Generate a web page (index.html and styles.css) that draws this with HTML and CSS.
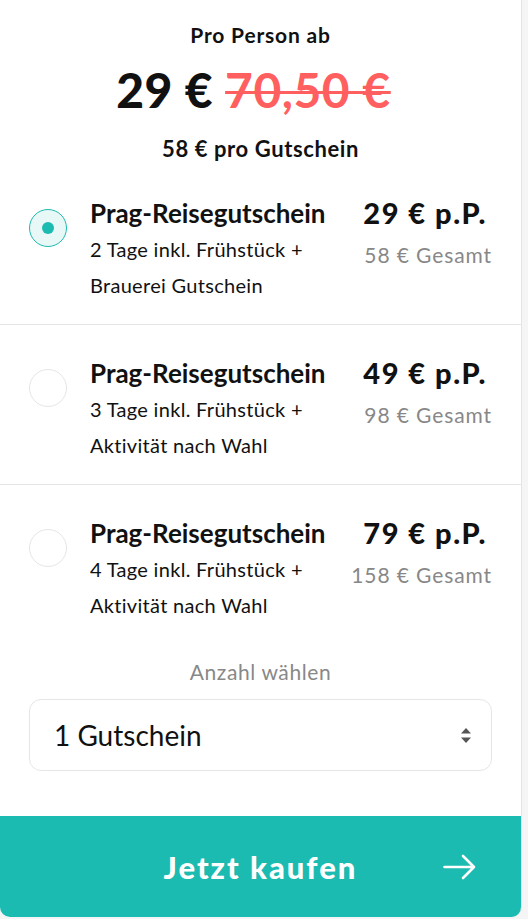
FILE: index.html
```
<!DOCTYPE html>
<html lang="de">
<head>
  <meta charset="UTF-8" />
  <meta name="viewport" content="width=device-width, initial-scale=1" />
  <title>Prag-Reisegutschein</title>
  <link rel="stylesheet" href="styles.css">
</head>
<body>
  <div class="card">
    <div class="summary">
      <div class="summary-label">Pro Person ab</div>
      <div class="summary-price">
        <span class="price-now">29 €</span>
        <span class="price-old">70,50 €</span>
      </div>
      <div class="summary-sub">58 € pro Gutschein</div>
    </div>

    <ul class="options">
      <li class="option selected">
        <span class="radio"></span>
        <div class="option-text">
          <div class="option-title">Prag-Reisegutschein</div>
          <div class="option-desc">2 Tage inkl. Frühstück +<br>Brauerei Gutschein</div>
        </div>
        <div class="option-price">
          <div class="per-person">29 € p.P.</div>
          <div class="total">58 € Gesamt</div>
        </div>
      </li>
      <li class="option">
        <span class="radio"></span>
        <div class="option-text">
          <div class="option-title">Prag-Reisegutschein</div>
          <div class="option-desc">3 Tage inkl. Frühstück +<br>Aktivität nach Wahl</div>
        </div>
        <div class="option-price">
          <div class="per-person">49 € p.P.</div>
          <div class="total">98 € Gesamt</div>
        </div>
      </li>
      <li class="option">
        <span class="radio"></span>
        <div class="option-text">
          <div class="option-title">Prag-Reisegutschein</div>
          <div class="option-desc">4 Tage inkl. Frühstück +<br>Aktivität nach Wahl</div>
        </div>
        <div class="option-price">
          <div class="per-person">79 € p.P.</div>
          <div class="total">158 € Gesamt</div>
        </div>
      </li>
    </ul>

    <div class="quantity">
      <div class="quantity-label">Anzahl wählen</div>
      <div class="select">
        <span>1 Gutschein</span>
        <svg width="10" height="15" viewBox="0 0 10 15">
          <path d="M5 0 L10 5.5 H0 Z" fill="#555" />
          <path d="M5 15 L10 9.5 H0 Z" fill="#555" />
        </svg>
      </div>
    </div>

    <button class="buy">
      <span class="buy-text">Jetzt kaufen</span>
      <svg class="buy-arrow" width="34" height="26" viewBox="0 0 34 26">
        <path d="M1.5 13 H31 M20 2 L31 13 L20 24" fill="none" stroke="#fff" stroke-width="2.6" stroke-linecap="round" stroke-linejoin="round" />
      </svg>
    </button>
  </div>
</body>
</html>
```

FILE: styles.css
```
* {
  box-sizing: border-box;
}

body {
  margin: 0;
  background: #f5f5f5;
  font-family: Lato, 'Noto Sans', sans-serif;
  color: #111;
}

.card {
  width: 522px;
  height: 917px;
  background: #fff;
  border-right: 1px solid #e4e4e4;
  border-radius: 0 0 10px 10px;
  overflow: hidden;
  display: flex;
  flex-direction: column;
}

.summary {
  text-align: center;
  padding-top: 23px;
}

.summary-label {
  font-size: 21px;
  font-weight: 700;
  line-height: 24px;
  letter-spacing: 0.8px;
}

.summary-price {
  margin-top: 15px;
  padding-right: 14px;
  font-size: 48px;
  font-weight: 900;
  line-height: 56px;
  letter-spacing: 0.5px;
}

.price-old {
  color: #ff5f5f;
  font-weight: 700;
  text-decoration: line-through;
  text-decoration-thickness: 3px;
}

.summary-sub {
  margin-top: 18px;
  font-size: 22px;
  font-weight: 700;
  line-height: 26px;
  letter-spacing: 0.6px;
}

.options {
  list-style: none;
  margin: 3px 0 0;
  padding: 0;
}

.option {
  display: flex;
  align-items: flex-start;
  padding: 32px 29px 21px 29px;
  border-bottom: 1px solid #e4e4e4;
}

.option:last-child {
  border-bottom: none;
}

.radio {
  flex: none;
  width: 38px;
  height: 38px;
  margin-top: 12px;
  border-radius: 50%;
  border: 1px solid #e6e6e6;
  display: flex;
  align-items: center;
  justify-content: center;
}

.option.selected .radio {
  border-color: #1bbbb1;
  background: #e8f8f6;
}

.option.selected .radio::after {
  content: "";
  width: 12px;
  height: 12px;
  border-radius: 50%;
  background: #1bbbb1;
}

.option-text {
  flex: 1;
  margin-left: 23px;
}

.option-title {
  font-size: 26px;
  font-weight: 700;
  line-height: 32px;
}

.option-desc {
  margin-top: 2px;
  font-size: 20px;
  line-height: 36px;
  letter-spacing: 0.3px;
}

.option-price {
  text-align: right;
}

.per-person {
  padding-right: 5px;
  font-size: 29px;
  font-weight: 900;
  line-height: 32px;
  letter-spacing: 1.5px;
}

.total {
  margin-top: 13px;
  font-size: 21px;
  line-height: 26px;
  letter-spacing: 0.9px;
  color: #888;
}

.quantity {
  padding: 14px 29px 0;
  text-align: center;
}

.quantity-label {
  font-size: 21px;
  line-height: 28px;
  letter-spacing: 0.6px;
  color: #888;
}

.select {
  margin-top: 13px;
  height: 72px;
  border: 1px solid #e6e6e6;
  border-radius: 12px;
  display: flex;
  align-items: center;
  justify-content: space-between;
  padding: 0 20px 0 24px;
  font-size: 28px;
  text-align: left;
}

.buy {
  margin-top: auto;
  height: 101px;
  border: none;
  background: #1bbbb1;
  color: #fff;
  font-family: Lato, 'Noto Sans', sans-serif;
  font-size: 31px;
  font-weight: 900;
  letter-spacing: 2px;
  display: grid;
  grid-template-columns: 1fr auto 1fr;
  align-items: center;
  padding: 0 44px;
}

.buy-text {
  grid-column: 2;
}

.buy-arrow {
  grid-column: 3;
  justify-self: end;
}
```
